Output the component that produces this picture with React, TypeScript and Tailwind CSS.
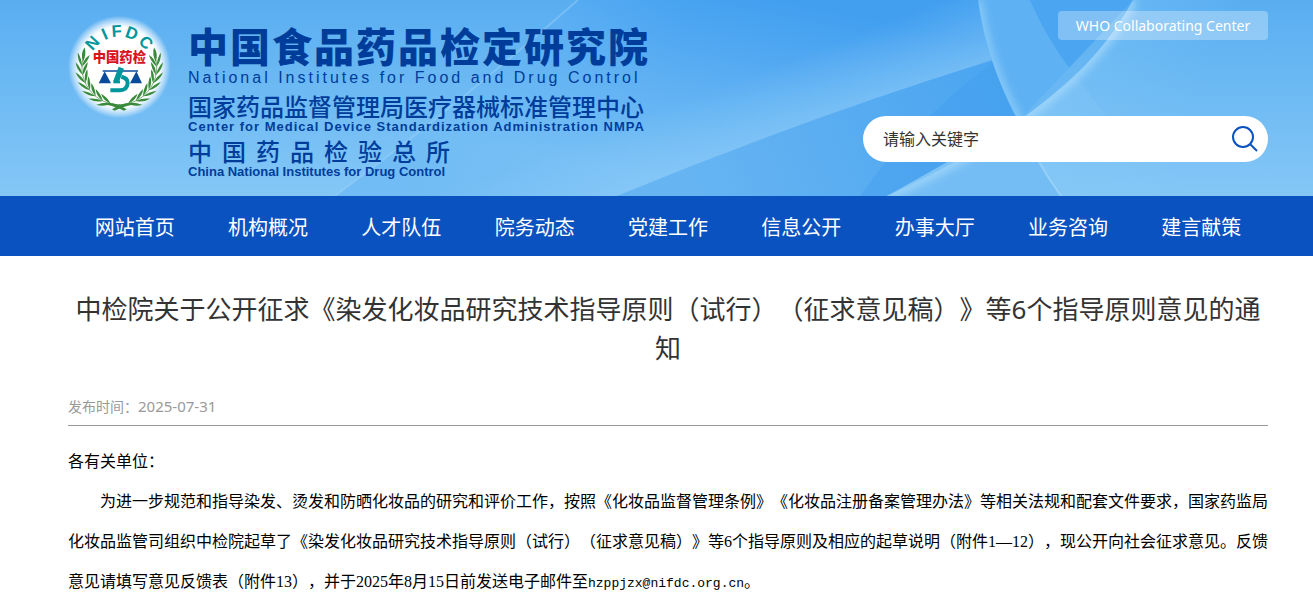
const navItems = [
    "网站首页",
    "机构概况",
    "人才队伍",
    "院务动态",
    "党建工作",
    "信息公开",
    "办事大厅",
    "业务咨询",
    "建言献策",
]

// angle along the wreath stem, measured from the bottom
const leafAngles = [14, 27, 40, 53, 66, 79, 92]

const arcLetters = [
    { char: "N", angle: -48 },
    { char: "I", angle: -24 },
    { char: "F", angle: -4 },
    { char: "D", angle: 20 },
    { char: "C", angle: 47 },
]

const Branch = () => {
    return (
        <g fill="#3a8a3c">
            <path d="M200 298 Q160 270 118 282 Q150 282 192 302 Z" />
            <path d="M180 284 A112 112 0 0 1 68 150" fill="none" stroke="#3a8a3c" strokeWidth="2" />
            {leafAngles.map((angle) => (
                <g key={angle} transform={`rotate(${angle} 178 172)`}>
                    <path d="M180 284 Q162 266 144 262 Q154 280 180 284 Z" />
                    <path d="M180 284 Q162 299 138 298 Q154 286 180 284 Z" />
                </g>
            ))}
            <path d="M74 112 Q60 132 69 156 Q80 134 74 112 Z" />
        </g>
    )
}

const Emblem = () => {
    return (
        <svg viewBox="0 0 360 330" className="h-[110px] w-[120px] shrink-0" role="img" aria-label="NIFDC">
            <defs>
                <radialGradient id="halo">
                    <stop offset="0" stopColor="#fff" />
                    <stop offset="0.78" stopColor="#fff" />
                    <stop offset="0.9" stopColor="#fff" stopOpacity="0.5" />
                    <stop offset="1" stopColor="#fff" stopOpacity="0" />
                </radialGradient>
            </defs>
            <circle cx="178" cy="171" r="154" fill="url(#halo)" />
            <Branch />
            <g transform="matrix(-1 0 0 1 356 0)">
                <Branch />
            </g>
            <g fill="#00969b" fontFamily="Liberation Sans, sans-serif" fontSize="50" fontWeight="700" textAnchor="middle">
                {arcLetters.map(({ char, angle }) => (
                    <text key={char} x="178" y="80" transform={`rotate(${angle} 178 172)`}>{char}</text>
                ))}
            </g>
            <text x="178" y="144" fill="#d7141e" fontFamily="Noto Sans CJK SC, sans-serif" fontSize="40" fontWeight="900" textAnchor="middle" dominantBaseline="middle">中国药检</text>
            {/* Scales */}
            <g fill="#0a4a9b">
                <path d="M128 181h106v4H128z" />
                <path d="M134 184 L153 220 H116 Z" />
                <path d="M229 184 L246 220 H210 Z" />
            </g>
            {/* Microscope */}
            <g fill="none" stroke="#00969b">
                <path d="M184 173 L168 216" strokeWidth="17" />
                <path d="M160 216 h20" strokeWidth="8" />
                <path d="M184 200 Q204 204 203 220 Q201 240 180 241 H151" strokeWidth="12" />
            </g>
        </svg>
    )
}

const HeaderBackground = () => {
    return (
        <svg viewBox="0 0 1313 196" preserveAspectRatio="none" className="absolute inset-0 h-full w-full" aria-hidden="true">
            <defs>
                <linearGradient id="sky" x1="0" y1="0" x2="0" y2="1">
                    <stop offset="0" stopColor="#59aef1" />
                    <stop offset="1" stopColor="#84c7f6" />
                </linearGradient>
                <linearGradient id="deep" gradientUnits="userSpaceOnUse" x1="780" y1="0" x2="740" y2="196">
                    <stop offset="0" stopColor="#429ff0" />
                    <stop offset="1" stopColor="#78c0f5" />
                </linearGradient>
                <linearGradient id="deepFade" gradientUnits="userSpaceOnUse" x1="420" y1="60" x2="640" y2="140">
                    <stop offset="0" stopColor="#6cb9f4" stopOpacity="0.6" />
                    <stop offset="1" stopColor="#6cb9f4" stopOpacity="0" />
                </linearGradient>
                <linearGradient id="beam" gradientUnits="userSpaceOnUse" x1="778" y1="64" x2="803" y2="129">
                    <stop offset="0" stopColor="#8ccbf8" stopOpacity="0" />
                    <stop offset="1" stopColor="#8ccbf8" stopOpacity="0.6" />
                </linearGradient>
                <linearGradient id="shade" gradientUnits="userSpaceOnUse" x1="700" y1="196" x2="990" y2="60">
                    <stop offset="0" stopColor="#66b4f2" />
                    <stop offset="1" stopColor="#4ba5f0" />
                </linearGradient>
                <linearGradient id="leaf" gradientUnits="userSpaceOnUse" x1="1020" y1="100" x2="1160" y2="170">
                    <stop offset="0" stopColor="#7fc5f7" stopOpacity="0.5" />
                    <stop offset="1" stopColor="#7fc5f7" stopOpacity="0" />
                </linearGradient>
                <linearGradient id="lens" gradientUnits="userSpaceOnUse" x1="1040" y1="110" x2="1180" y2="160">
                    <stop offset="0" stopColor="#8ccbf8" stopOpacity="0.3" />
                    <stop offset="1" stopColor="#84c7f6" stopOpacity="0.1" />
                </linearGradient>
                <filter id="soft" x="-20%" y="-20%" width="140%" height="140%">
                    <feGaussianBlur stdDeviation="4" />
                </filter>
                <clipPath id="rightOfA">
                    <path d="M978 0 Q986 60 1016 116 Q1036 162 1061 196 H1313 V0 Z" />
                </clipPath>
                <clipPath id="rightOfB">
                    <path d="M1133 0 C1100 60 1060 90 1018 122 Q965 160 887 196 H1313 V0 Z" />
                </clipPath>
            </defs>
            <rect width="1313" height="196" fill="url(#sky)" />
            <path d="M578 0 Q462 102 335 196 H617 Q800 120 993 60 Q983 30 978 0 Z" fill="url(#deep)" />
            <path d="M578 0 Q462 102 335 196 H617 Q800 120 993 60 Q983 30 978 0 Z" fill="url(#deepFade)" />
            <path d="M578 0 Q462 102 335 196 H617 Q800 120 993 60 Q983 30 978 0 Z" fill="url(#beam)" />
            <path d="M578 0 Q462 102 335 196" fill="none" stroke="#a3d5fa" strokeOpacity="0.4" strokeWidth="2" />
            <path d="M617 196 Q800 120 993 60 L1018 122 L887 196 Z" fill="url(#shade)" />
            <path d="M860 196 Q905 130 993 62 L1018 122 L887 196 Z" fill="#3e9bed" fillOpacity="0.35" />
            <path d="M978 0 Q986 60 1018 122 L1133 0 Z" fill="#4ba5f0" />
            <path d="M978 0 Q986 60 1018 122 Q1050 98 1073 73 Q1045 36 1030 0 Z" fill="#66b7f4" fillOpacity="0.7" />
            <g clipPath="url(#rightOfA)">
                <path d="M978 0 Q986 60 1016 116 Q1036 162 1061 196" fill="none" stroke="#a3d8fb" strokeOpacity="0.7" strokeWidth="8" filter="url(#soft)" />
            </g>
            <g clipPath="url(#rightOfB)">
                <rect x="880" width="433" height="196" fill="url(#sky)" />
                <rect x="880" width="433" height="196" fill="url(#leaf)" />
                <path d="M1018 116 Q1036 162 1061 196 H887 Q965 160 1018 116 Z" fill="#74bdf4" />
                <path d="M1016 116 Q1036 162 1061 196 H1203 Q1120 140 1073 73 Z" fill="url(#lens)" />
                <path d="M1133 0 C1100 60 1060 90 1018 122 Q965 160 887 196" fill="none" stroke="#a9dbfc" strokeOpacity="0.8" strokeWidth="10" filter="url(#soft)" />
                <path d="M1016 116 Q1036 162 1061 196" fill="none" stroke="#a9dbfc" strokeOpacity="0.6" strokeWidth="2" />
            </g>
        </svg>
    )
}

const Header = () => {
    return (
        <header className="relative h-[196px] overflow-hidden">
            <HeaderBackground />
            <div className="relative flex justify-between pr-[45px] pl-[60px]">
                <a href="#" className="flex text-[#003d9b]">
                    <div className="pt-[10px]">
                        <Emblem />
                    </div>
                    <div className="pt-6 pl-2 whitespace-nowrap">
                        <h1 className="text-[40px] leading-[46px] font-black tracking-[2px]">中国食品药品检定研究院</h1>
                        <p className="font-['Liberation_Sans',sans-serif] text-[16px] leading-[16px] tracking-[3px]">National Institutes for Food and Drug Control</p>
                        <p className="mt-2 text-[24px] leading-[26px] font-medium">国家药品监督管理局医疗器械标准管理中心</p>
                        <p className="font-['Liberation_Sans',sans-serif] text-[13px] leading-[14px] font-bold tracking-[1px]">Center for Medical Device Standardization Administration NMPA</p>
                        <p className="mt-[5px] flex gap-[10px] text-[24px] leading-[26px] font-medium">
                            {"中国药品检验总所".split("").map((char) => (
                                <span key={char}>{char}</span>
                            ))}
                        </p>
                        <p className="font-['Liberation_Sans',sans-serif] text-[13px] leading-[14px] font-bold">China National Institutes for Drug Control</p>
                    </div>
                </a>
                <div className="flex flex-col items-end pt-[11px]">
                    <a href="#" className="flex h-[29px] w-[210px] items-center justify-center rounded bg-white/30 text-[14px] whitespace-nowrap text-white">WHO Collaborating Center</a>
                    <form className="mt-[76px] flex h-[46px] w-[405px] items-center rounded-full bg-white pr-[9px] pl-5">
                        <input
                            type="text"
                            aria-label="请输入关键字"
                            placeholder="请输入关键字"
                            className="min-w-0 flex-1 text-[16px] text-[#333] outline-none placeholder:text-[#333]"
                        />
                        <button type="button" aria-label="搜索" className="text-[#0b52c1]">
                            <svg viewBox="0 0 28 28" className="h-7 w-7" fill="none" stroke="currentColor" strokeWidth="2">
                                <circle cx="12" cy="12" r="10" />
                                <path d="M19 19l7 7" />
                            </svg>
                        </button>
                    </form>
                </div>
            </div>
        </header>
    )
}

const Navbar = () => {
    return (
        <nav className="bg-[#0b52c1] pr-[45px] pl-[68px]">
            <ul className="grid h-[60px] grid-cols-9 items-center pt-[3px] text-center text-[20px] text-white">
                {navItems.map((item) => (
                    <li key={item}>
                        <a href="#" className="whitespace-nowrap hover:underline">{item}</a>
                    </li>
                ))}
            </ul>
        </nav>
    )
}

export default function App() {
    return (
        <div className="bg-white font-['Noto_Sans','Noto_Sans_CJK_SC',sans-serif] [text-spacing-trim:space-all]" lang="zh-CN">
            <Header />
            <Navbar />
            <main className="pt-[34px] pr-[45px] pl-[68px]">
                <h2 className="text-center text-[26px] leading-[39px] text-[#333]">
                    中检院关于公开征求《染发化妆品研究技术指导原则（试行）（征求意见稿）》等6个指导原则意见的通知
                </h2>
                <div className="mt-7 border-b border-[#999] pb-2 text-[14px] leading-[20px] text-[#999]">
                    发布时间：<time className="text-[15px]">2025-07-31</time>
                </div>
                <article className="mt-4 font-['Liberation_Serif','Noto_Sans_CJK_SC',serif] text-[16px] leading-[40px] text-black">
                    <p>各有关单位：</p>
                    <p className="indent-8 text-justify">
                        为进一步规范和指导染发、烫发和防晒化妆品的研究和评价工作，按照《化妆品监督管理条例》《化妆品注册备案管理办法》等相关法规和配套文件要求，国家药监局化妆品监管司组织中检院起草了《染发化妆品研究技术指导原则（试行）（征求意见稿）》等6个指导原则及相应的起草说明（附件1—12），现公开向社会征求意见。反馈意见请填写意见反馈表（附件13），并于2025年8月15日前发送电子邮件至<span className="font-['Liberation_Mono',monospace] text-[13px]">hzppjzx@nifdc.org.cn</span>。
                    </p>
                </article>
            </main>
        </div>
    )
}
